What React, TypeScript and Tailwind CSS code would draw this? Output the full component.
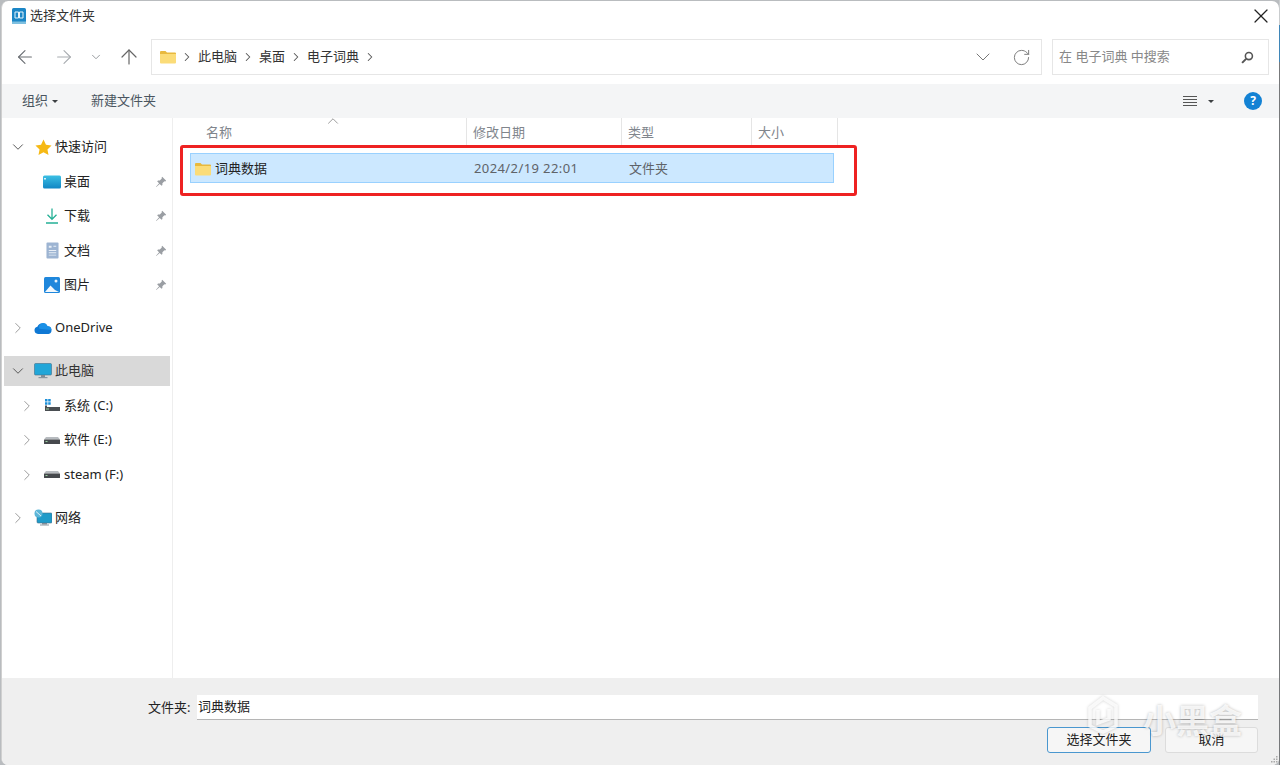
import React from 'react';
import { ArrowLeft, ArrowRight, ArrowUp, ChevronDown, ChevronRight, RotateCw, X } from 'lucide-react';

const FolderIcon = ({ className }: { className?: string }) => (
  <svg viewBox="0 0 16 14" className={className}>
    <path d="M0 2a1 1 0 0 1 1-1h4.500l1.500 1.500h8a1 1 0 0 1 1 1V4H0z" fill="#e8b93e" />
    <path d="M0 4h16v8.500a1 1 0 0 1-1 1H1a1 1 0 0 1-1-1z" fill="#fbdc78" />
  </svg>
);

const PinIcon = () => (
  <svg viewBox="0 0 12 12" className="w-3 h-3">
    <path d="M7.200 0.800 11.200 4.800 10.200 5.400 9.400 5.200 7.400 7.200 7.400 9 6.600 9.800 4.700 7.900 1.300 11 1 10.700 4.100 7.300 2.200 5.400 3 4.600 4.800 4.600 6.800 2.600 6.600 1.800z" fill="#9a9ea3" />
  </svg>
);

const DesktopIcon = () => (
  <svg viewBox="0 0 18 14" className="w-[18px] h-[14px]">
    <defs>
      <linearGradient id="desk" x1="0" y1="0" x2="0" y2="1">
        <stop offset="0" stopColor="#3cc0e4" />
        <stop offset="1" stopColor="#1186c4" />
      </linearGradient>
    </defs>
    <rect x="0" y="0.500" width="18" height="13" rx="1.500" fill="url(#desk)" />
    <rect x="1" y="3" width="2" height="1.500" fill="#d6f3fb" />
  </svg>
);

const DownloadIcon = () => (
  <svg viewBox="0 0 14 16" className="w-[14px] h-[16px]" fill="none" stroke="#25b096" strokeWidth="1.300">
    <path d="M7 0.500V11M2.500 6.800 7 11.300 11.500 6.800M1 15h12" />
  </svg>
);

const DocIcon = () => (
  <svg viewBox="0 0 14 18" className="w-[13px] h-[17px]">
    <rect x="0.500" y="0.500" width="13" height="17" rx="1" fill="#9db4d2" />
    <path d="M3 4h3v2H3zM3 8.500h8v1H3zM3 11h8v1H3zM3 13.500h8v1H3zM8 4h3v1H8z" fill="#e8eef6" />
  </svg>
);

const PictureIcon = () => (
  <svg viewBox="0 0 16 16" className="w-4 h-4">
    <rect width="16" height="16" rx="1.500" fill="#1f87dc" />
    <circle cx="12" cy="4" r="1.500" fill="#e6f3fc" />
    <path d="M1 15 6.500 8.500 11 13 15 15z" fill="#f3f8fc" />
  </svg>
);

const CloudIcon = () => (
  <svg viewBox="0 0 18 11" className="w-[18px] h-[11px]">
    <path d="M4 11a3.700 3.700 0 0 1-.600-7.300A5.500 5.500 0 0 1 13.500 3.300 3.900 3.900 0 0 1 14.500 11z" fill="#0f78d4" />
    <path d="M5 5.500a3.500 3.500 0 0 1 8.500-2.200A3.900 3.900 0 0 1 17.400 7L7 6z" fill="#1b90e6" />
  </svg>
);

const MonitorIcon = () => (
  <svg viewBox="0 0 18 16" className="w-[18px] h-4">
    <rect x="0.500" y="0.500" width="17" height="11.500" rx="1" fill="#22a6d8" stroke="#3f6f8c" strokeWidth="0.600" />
    <rect x="7" y="12" width="4" height="2" fill="#7f8c96" />
    <rect x="4.500" y="14" width="9" height="1.200" fill="#8a969f" />
  </svg>
);

const SystemDiskIcon = () => (
  <svg viewBox="0 0 16 13" className="w-4 h-[13px]">
    <path d="M1 0h2.500v2.500H1zM4.200 0h2.500v2.500H4.200zM1 3.200h2.500v2.500H1zM4.200 3.200h2.500v2.500H4.200z" fill="#1c8fd8" />
    <path d="M1 6.500h2V8h13v4H1z" fill="#4a4e52" />
    <rect x="2" y="9.500" width="3" height="1" fill="#9ad0a0" />
  </svg>
);

const DiskIcon = () => (
  <svg viewBox="0 0 16 7" className="w-4 h-[7px]">
    <path d="M2 0h12l2 2.500H0z" fill="#b7bbbf" />
    <rect y="2.500" width="16" height="4.500" rx="0.500" fill="#46494d" />
    <rect x="1.500" y="4" width="2" height="1" fill="#9ad0a0" />
  </svg>
);

const NetworkIcon = () => (
  <svg viewBox="0 0 18 17" className="w-[18px] h-[17px]">
    <rect x="3" y="4" width="15" height="10" rx="1" fill="#1f9bc9" stroke="#3f6f8c" strokeWidth="0.600" />
    <rect x="8" y="14" width="5" height="1.500" fill="#7f8c96" />
    <rect x="6" y="15.500" width="9" height="1" fill="#8a969f" />
    <circle cx="4.500" cy="4.500" r="4" fill="#5cb6d8" />
    <path d="M2 2.500 7 7" stroke="#dff2f9" strokeWidth="1" />
  </svg>
);

const StarIcon = () => (
  <svg viewBox="0 0 18 18" className="w-[17px] h-[17px]">
    <path d="M9 0.500 11.600 6 17.500 6.800 13.200 11 14.300 17 9 14.100 3.700 17 4.800 11 0.500 6.800 6.400 6z" fill="#f6b915" />
  </svg>
);

const AppIcon = () => (
  <svg viewBox="0 0 14 16" className="w-[14px] h-[16px]">
    <rect width="14" height="16" rx="1.500" fill="#1b86c6" />
    <rect y="13.500" width="14" height="2.500" fill="#7fc0e0" />
    <path d="M3 4h3.500v6H3zM7.500 4H11v6H7.500z" fill="none" stroke="#e6f4fb" strokeWidth="1" />
  </svg>
);

const Caret = () => <div className="w-0 h-0 border-x-[3px] border-x-transparent border-t-[3px] border-t-[#3c4043]" />;

interface TreeRowProps {
  indent: string;
  open?: boolean;
  noArrow?: boolean;
  icon: React.ReactNode;
  label: string;
  pinned?: boolean;
  selected?: boolean;
  className?: string;
}

const TreeRow = ({ indent, open, noArrow, icon, label, pinned, selected, className }: TreeRowProps) => (
  <div className={`h-[30px] flex items-center ${selected ? 'bg-[#d9d9d9]' : ''} ${className ?? ''}`}>
    <div className={`${indent} flex items-center shrink-0`}>
      {!noArrow && (open
        ? <ChevronDown className="w-[18px] h-[18px] text-[#555]" strokeWidth={1.3} />
        : <ChevronRight className="w-[18px] h-[18px] text-[#999]" strokeWidth={1.3} />)}
    </div>
    <div className="w-5 flex items-center justify-center shrink-0">{icon}</div>
    <span className={`text-[13px] ml-[2px] whitespace-nowrap ${selected ? 'text-[#333]' : 'text-[#222]'}`}>{label}</span>
    {pinned && <div className="ml-auto mr-[3px]"><PinIcon /></div>}
  </div>
);

const CrumbArrow = () => <ChevronRight className="w-[14px] h-[14px] text-[#555]" strokeWidth={1.8} />;

const HeaderCell = ({ width, label, pad }: { width: string; label: string; pad: string }) => (
  <div className={`${width} ${pad} pt-[2px] h-full border-r border-[#e5e5e5] flex items-center text-[13px] text-[#80858c]`}>{label}</div>
);

export default function App() {
  return (
    <div className="w-[1280px] h-[765px] bg-[#b9bcbf] overflow-hidden" style={{ fontFamily: '"Noto Sans", "Noto Sans CJK SC", sans-serif' }}>
      <div className="w-[1280px] h-[765px] flex">
        <div className="w-px shrink-0" />
        <div className="w-[1278px] shrink-0 mt-[1px] relative bg-white rounded-[7px] flex flex-col overflow-hidden border-l border-[#d0d0d0]">

          {/* title bar */}
          <div className="h-[32px] shrink-0 flex items-center pl-[10px] pr-[6px] pb-[2px]">
            <AppIcon />
            <span className="ml-[4px] text-[13px] text-[#333]">选择文件夹</span>
            <button className="ml-auto w-6 h-6 flex items-center justify-center">
              <X className="w-6 h-6 text-[#222]" strokeWidth={1.2} />
            </button>
          </div>

          {/* address row */}
          <div className="h-[51px] shrink-0 flex items-start pt-[6px] pl-[12px]">
            <div className="h-[36px] flex items-center">
              <ArrowLeft className="w-[22px] h-[22px] text-[#6a6e73]" strokeWidth={1.2} />
              <ArrowRight className="w-[22px] h-[22px] text-[#a8acb0] ml-[17px]" strokeWidth={1.2} />
              <ChevronDown className="w-[14px] h-[14px] text-[#8a8e92] ml-[14px]" strokeWidth={1.5} />
              <ArrowUp className="w-6 h-6 text-[#666] ml-[14px]" strokeWidth={1.2} />
            </div>
            <div className="ml-[10px] w-[891px] h-[36px] border border-[#e6e6e6] flex items-center pl-[8px] pr-[10px]">
              <FolderIcon className="w-[16px] h-[14px]" />
              <div className="ml-[4px] flex items-center gap-[4px]">
                <CrumbArrow />
                <span className="text-[13px] text-[#333]">此电脑</span>
                <CrumbArrow />
                <span className="text-[13px] text-[#333]">桌面</span>
                <CrumbArrow />
                <span className="text-[13px] text-[#333]">电子词典</span>
                <CrumbArrow />
              </div>
              <ChevronDown className="ml-auto w-6 h-6 text-[#777]" strokeWidth={1} />
              <RotateCw className="ml-[17px] w-[19px] h-[19px] text-[#777]" strokeWidth={1.2} />
            </div>
            <div className="ml-[10px] w-[217px] h-[36px] border border-[#e6e6e6] flex items-center pl-[6px] pr-[14px]">
              <span className="text-[13px] text-[#888]">在 电子词典 中搜索</span>
              <svg viewBox="0 0 14 14" className="ml-auto w-[13px] h-[13px]" fill="none" stroke="#555">
                <circle cx="8.500" cy="5.500" r="3.800" strokeWidth="1.700" />
                <path d="M5.500 8.500 1.200 12.800" strokeWidth="2.200" />
              </svg>
            </div>
          </div>

          {/* toolbar */}
          <div className="h-[34px] shrink-0 bg-[#f4f5f6] flex items-center pl-[20px] pr-[17px]">
            <span className="text-[13px] text-[#4a5560]">组织</span>
            <div className="ml-[4px]"><Caret /></div>
            <span className="ml-[33px] text-[13px] text-[#4a5560]">新建文件夹</span>
            <div className="ml-auto w-[14px] flex flex-col gap-[2px]">
              <div className="h-px bg-[#555]" />
              <div className="h-px bg-[#555]" />
              <div className="h-px bg-[#555]" />
              <div className="h-px bg-[#555]" />
            </div>
            <div className="ml-[11px]"><Caret /></div>
            <div className="ml-[30px] w-[18px] h-[18px] rounded-full bg-[#1382d4] flex items-center justify-center text-white text-[12px] font-bold leading-none">?</div>
          </div>

          {/* main */}
          <div className="flex-1 flex min-h-0">
            <div className="w-[171px] shrink-0 border-r border-[#eeeeee] pt-[14px] pl-[2px] pr-[2px]">
              <TreeRow indent="w-[29px] pl-[5px]" open icon={<StarIcon />} label="快速访问" />
              <TreeRow indent="w-[38px]" noArrow className="mt-[4.500px]" icon={<DesktopIcon />} label="桌面" pinned />
              <TreeRow indent="w-[38px]" noArrow className="mt-[4.500px]" icon={<DownloadIcon />} label="下载" pinned />
              <TreeRow indent="w-[38px]" noArrow className="mt-[4.500px]" icon={<DocIcon />} label="文档" pinned />
              <TreeRow indent="w-[38px]" noArrow className="mt-[4.500px]" icon={<PictureIcon />} label="图片" pinned />
              <TreeRow indent="w-[29px] pl-[5px]" className="mt-[13px]" icon={<CloudIcon />} label="OneDrive" />
              <TreeRow indent="w-[29px] pl-[5px]" open selected className="mt-[13px]" icon={<MonitorIcon />} label="此电脑" />
              <TreeRow indent="w-[38px] pl-[14px]" className="mt-[4.500px]" icon={<SystemDiskIcon />} label="系统 (C:)" />
              <TreeRow indent="w-[38px] pl-[14px]" className="mt-[4.500px]" icon={<DiskIcon />} label="软件 (E:)" />
              <TreeRow indent="w-[38px] pl-[14px]" className="mt-[4.500px]" icon={<DiskIcon />} label="steam (F:)" />
              <TreeRow indent="w-[29px] pl-[5px]" className="mt-[13px]" icon={<NetworkIcon />} label="网络" />
            </div>

            <div className="flex-1 min-w-0 relative">
              <ChevronDown className="absolute left-[151px] -top-[6px] w-[18px] h-[18px] text-[#888] rotate-180" strokeWidth={1.1} />
              <div className="h-[27px] flex">
                <HeaderCell width="w-[294px]" pad="pl-[33px]" label="名称" />
                <HeaderCell width="w-[155px]" pad="pl-[6px]" label="修改日期" />
                <HeaderCell width="w-[130px]" pad="pl-[6px]" label="类型" />
                <HeaderCell width="w-[86px]" pad="pl-[6px]" label="大小" />
              </div>
              <div className="ml-[7px] w-[677px] h-[51px] border-[3px] border-[#ee2222] rounded-[3px] pt-[5px] pl-[7px]">
                <div className="w-[644px] h-[30px] pt-[2px] bg-[#cce8ff] border border-[#99d1ff] flex items-center text-[13px]">
                  <div className="w-[283px] flex items-center pl-[4px]">
                    <FolderIcon className="w-[16px] h-[14px]" />
                    <span className="ml-[4px] text-[#222]">词典数据</span>
                  </div>
                  <span className="w-[155px] tracking-[0.4px] text-[#5f6368]">2024/2/19 22:01</span>
                  <span className="text-[#5f6368]">文件夹</span>
                </div>
              </div>
            </div>
          </div>

          {/* footer */}
          <div className="h-[87px] shrink-0 bg-[#efefef] relative pt-[17px] pr-[21px]">
            <div className="flex items-center">
              <span className="ml-[146px] w-[49px] text-[13px] text-[#222]">文件夹:</span>
              <div className="flex-1 h-[25px] bg-white border-b border-[#b5b5b5] pl-[1px] flex items-center text-[13px] text-[#222]">词典数据</div>
            </div>
            <div className="mt-[7px] flex justify-end gap-[14px]">
              <button className="w-[104px] h-[26px] rounded-[3px] border border-[#4a97cf] bg-[#f6f6f6] text-[13px] text-[#222]">选择文件夹</button>
              <button className="w-[93px] h-[26px] rounded-[3px] border border-[#dcdcdc] bg-[#f6f6f6] text-[13px] text-[#222]">取消</button>
            </div>

            {/* watermark */}
            <div className="absolute left-[1086px] top-[17px] h-[39px] flex items-end gap-[25px] text-white/80 pointer-events-none">
              <svg viewBox="0 0 30 38" className="w-[30px] h-[38px] [filter:drop-shadow(0_0_1.500px_rgba(0,0,0,0.22))]" fill="none" stroke="currentColor" strokeWidth="3.500">
                <path d="M2 12 15 2 28 10V30L15 36 2 30z" />
                <path d="M10 14V27L21 23V13" />
              </svg>
              <span className="text-[33px] leading-[33px] -mb-[3px] font-bold [text-shadow:0_0_3px_rgba(0,0,0,0.28)]">小黑盒</span>
            </div>

            {/* resize grip */}
            <svg viewBox="0 0 7 7" className="absolute right-[1px] bottom-[2px] w-[7px] h-[7px]" fill="#a9a9a9">
              <rect x="5" y="0" width="1.500" height="1.500" />
              <rect x="2.500" y="2.500" width="1.500" height="1.500" />
              <rect x="5" y="2.500" width="1.500" height="1.500" />
              <rect x="0" y="5" width="1.500" height="1.500" />
              <rect x="2.500" y="5" width="1.500" height="1.500" />
              <rect x="5" y="5" width="1.500" height="1.500" />
            </svg>
          </div>
        </div>

        {/* what shows of the desktop behind the dialog */}
        <div className="w-px shrink-0 flex flex-col">
          <div className="h-[25px] bg-[#c9ccce]" />
          <div className="h-[37px] bg-[#3f86b8]" />
          <div className="flex-1 bg-[#77797b]" />
        </div>
      </div>
    </div>
  );
}
